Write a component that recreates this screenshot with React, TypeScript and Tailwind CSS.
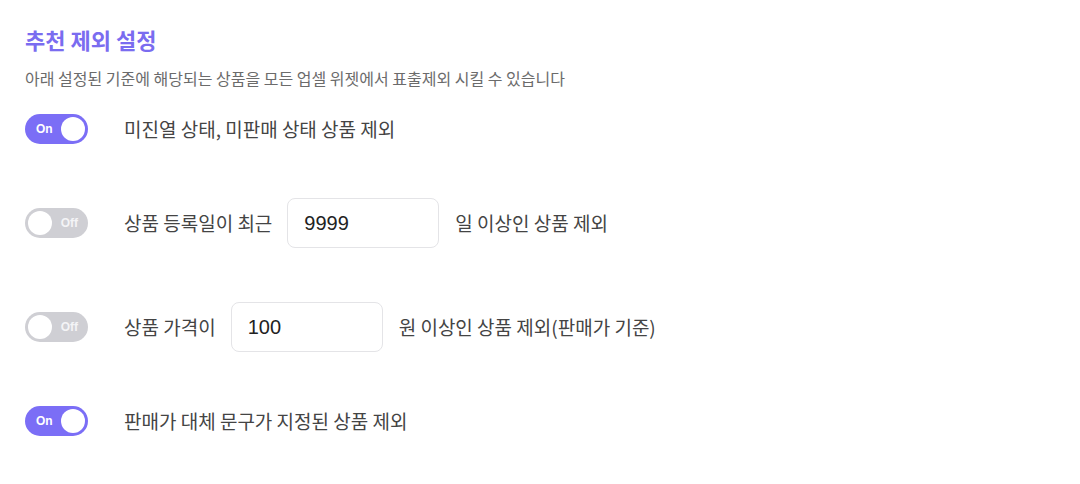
import { useState } from "react";

// Toggle switch with On / Off label
function Toggle({ on, onChange }: { on: boolean; onChange: () => void }) {
  return (
    <div
      role="switch"
      aria-checked={on}
      onClick={onChange}
      className={`relative h-[30px] w-[63px] cursor-pointer rounded-full ${
        on ? "bg-[#7b6ef6]" : "bg-[#cfcfd4]"
      }`}
    >
      {on ? (
        <>
          <span className="absolute left-[11px] top-[6px] text-[12px] font-bold leading-[18px] text-white font-['Liberation_Sans',sans-serif]">
            On
          </span>
          <span className="absolute right-[3px] top-[3px] h-[24px] w-[24px] rounded-full bg-white" />
        </>
      ) : (
        <>
          <span className="absolute right-[10px] top-[6px] text-[12px] font-bold leading-[18px] text-[#f4f4f6] font-['Liberation_Sans',sans-serif]">
            Off
          </span>
          <span className="absolute left-[3px] top-[3px] h-[24px] w-[24px] rounded-full bg-white" />
        </>
      )}
    </div>
  );
}

function NumberInput({ value }: { value: string }) {
  return (
    <input
      defaultValue={value}
      className="h-[50px] w-[152px] shrink-0 rounded-[8px] border border-[#e4e4e7] bg-white px-[16px] text-[20px] text-[#222] outline-none font-['Liberation_Sans',sans-serif]"
    />
  );
}

// One settings row: fixed toggle column, then the label content
function Row({
  on,
  onChange,
  tall,
  children,
}: {
  on: boolean;
  onChange: () => void;
  tall?: boolean;
  children: React.ReactNode;
}) {
  return (
    <div className={`flex items-center ${tall ? "h-[50px]" : "h-[30px]"}`}>
      <div className="w-[99px] shrink-0">
        <Toggle on={on} onChange={onChange} />
      </div>
      <div className="flex items-center">{children}</div>
    </div>
  );
}

export default function App() {
  const [toggles, setToggles] = useState([true, false, false, true]);
  const flip = (i: number) =>
    setToggles((t) => t.map((v, idx) => (idx === i ? !v : v)));

  return (
    <div className="min-h-[484px] w-[1080px] bg-white font-['Noto_Sans_CJK_KR',sans-serif]">
      <div className="px-[25px] pt-[23px]">
        <h2 className="text-[22px] font-bold leading-[32px] text-[#7a6cf0]">
          추천 제외 설정
        </h2>
        <p className="mt-[12px] text-[16px] leading-[22px] text-[#6b6b6b]">
          아래 설정된 기준에 해당되는 상품을 모든 업셀 위젯에서 표출제외 시킬 수 있습니다
        </p>

        <div className="mt-[25px] flex flex-col gap-[54px] text-[19px] text-[#444]">
          <Row on={toggles[0]} onChange={() => flip(0)}>
            <span>미진열 상태, 미판매 상태 상품 제외</span>
          </Row>

          <Row on={toggles[1]} onChange={() => flip(1)} tall>
            <span className="mr-[15px]">상품 등록일이 최근</span>
            <NumberInput value="9999" />
            <span className="ml-[16px]">일 이상인 상품 제외</span>
          </Row>

          <Row on={toggles[2]} onChange={() => flip(2)} tall>
            <span className="mr-[15px]">상품 가격이</span>
            <NumberInput value="100" />
            <span className="ml-[16px]">원 이상인 상품 제외(판매가 기준)</span>
          </Row>

          <Row on={toggles[3]} onChange={() => flip(3)}>
            <span>판매가 대체 문구가 지정된 상품 제외</span>
          </Row>
        </div>
      </div>
    </div>
  );
}
